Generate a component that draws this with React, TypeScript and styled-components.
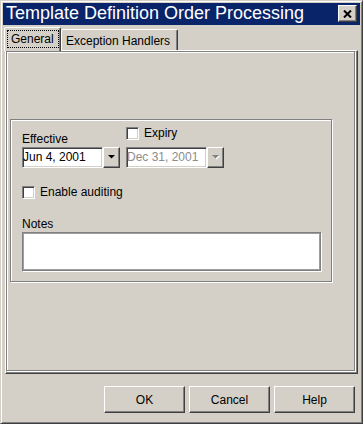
import styled, { createGlobalStyle } from 'styled-components';

const face = '#d4d0c8';
const shadow = '#808080';
const dark = '#404040';

const GlobalStyle = createGlobalStyle`
  html, body {
    margin: 0;
    padding: 0;
    background: ${face};
  }
  body {
    font-family: "Liberation Sans", Arial, sans-serif;
    font-size: 12px;
    color: #000;
  }
`;

const Window = styled.div`
  box-sizing: border-box;
  width: 363px;
  height: 424px;
  padding: 2px;
  display: flex;
  flex-direction: column;
  background: ${face};
  border: 1px solid;
  border-color: ${face} ${dark} ${dark} ${face};
  box-shadow: inset 1px 1px 0 #fff, inset -1px -1px 0 ${shadow};
`;

const TitleBar = styled.div`
  height: 22px;
  flex: none;
  display: flex;
  align-items: flex-start;
  justify-content: space-between;
  background: #0a246a;
`;

const Title = styled.div`
  padding-left: 3px;
  font-size: 18px;
  line-height: 20px;
  color: #fff;
  white-space: nowrap;
`;

const CloseButton = styled.div`
  box-sizing: border-box;
  width: 19px;
  height: 17px;
  margin: 2px 3px 0 0;
  display: flex;
  align-items: center;
  justify-content: center;
  background: ${face};
  border: 1px solid;
  border-color: #fff ${dark} ${dark} #fff;
  box-shadow: inset -1px -1px 0 ${shadow};
`;

const TabStrip = styled.div`
  height: 26px;
  flex: none;
  margin-bottom: -1px;
  padding-left: 1px;
  display: flex;
  align-items: flex-end;
  position: relative;
  z-index: 1;
`;

const Tab = styled.div<{ $selected?: boolean }>`
  box-sizing: border-box;
  width: ${(p) => (p.$selected ? '57px' : '117px')};
  height: ${(p) => (p.$selected ? '24px' : '21px')};
  margin-bottom: ${(p) => (p.$selected ? '0' : '1px')};
  padding: ${(p) => (p.$selected ? '2px 0 0 2px' : '3px 0 0 4px')};
  background: ${face};
  border: 1px solid;
  border-bottom: none;
  border-color: #fff ${dark} transparent #fff;
  border-radius: 2px 2px 0 0;
  box-shadow: inset -1px 0 0 ${shadow};
  font-size: 12px;
  line-height: 16px;
  white-space: nowrap;
`;

const Focus = styled.span`
  display: inline-block;
  padding: 0 4px 0 3px;
  border: 1px dotted #000;
`;

const TabBody = styled.div`
  box-sizing: border-box;
  height: 324px;
  flex: none;
  margin: 0 2px 0 2px;
  display: flex;
  border: 1px solid;
  border-color: #fff ${dark} ${dark} #fff;
  box-shadow: inset -1px -1px 0 ${shadow};
`;

const Page = styled.div`
  flex: 1;
  margin: 0 2px 2px 0;
  padding: 67px 0 0 3px;
  border: 1px solid ${shadow};
  box-shadow: inset 1px 1px 0 #fff, 1px 1px 0 #fff;
`;

const Group = styled.div`
  box-sizing: border-box;
  width: 322px;
  padding: 7px 0 10px 11px;
  border: 1px solid ${shadow};
  box-shadow: inset 1px 1px 0 #fff, 1px 1px 0 #fff;
`;

const DateRow = styled.div`
  display: flex;
  align-items: flex-end;
  gap: 6px;
`;

const Column = styled.div`
  display: flex;
  flex-direction: column;
`;

const Label = styled.div`
  line-height: 14px;
  margin-bottom: 1px;
`;

const CheckRow = styled.label<{ $top?: number; $bottom?: number }>`
  display: flex;
  align-items: center;
  gap: 5px;
  height: 13px;
  line-height: 13px;
  margin-top: ${(p) => p.$top ?? 0}px;
  margin-bottom: ${(p) => p.$bottom ?? 0}px;
`;

const CheckBox = styled.span`
  box-sizing: border-box;
  width: 13px;
  height: 13px;
  flex: none;
  background: #fff;
  border: 1px solid;
  border-color: ${shadow} #fff #fff ${shadow};
  box-shadow: inset 1px 1px 0 ${dark}, inset -1px -1px 0 ${face};
`;

const Combo = styled.div`
  display: flex;
`;

const Field = styled.div<{ $disabled?: boolean }>`
  box-sizing: border-box;
  width: 81px;
  height: 21px;
  background: #fff;
  border: 1px solid;
  border-color: ${shadow} #fff #fff ${shadow};
  box-shadow: inset 1px 1px 0 ${dark}, inset -1px -1px 0 ${face};
  line-height: 19px;
  white-space: nowrap;
  color: ${(p) => (p.$disabled ? '#8c8c8c' : '#000')};
`;

const ArrowButton = styled.div`
  box-sizing: border-box;
  width: 17px;
  height: 21px;
  display: flex;
  align-items: center;
  justify-content: center;
  background: ${face};
  border: 1px solid;
  border-color: #fff ${dark} ${dark} #fff;
  box-shadow: inset -1px -1px 0 ${shadow};
`;

const NotesLabel = styled(Label)`
  margin-top: 18px;
`;

const Notes = styled.div`
  box-sizing: border-box;
  width: 299px;
  height: 39px;
  background: #fff;
  border: 1px solid ${shadow};
  box-shadow: inset 0 0 0 1px #a09d98, 1px 1px 0 #fff;
`;

const ButtonBar = styled.div`
  flex: none;
  margin-top: 12px;
  padding-right: 5px;
  display: flex;
  justify-content: flex-end;
  gap: 4px;
`;

const Button = styled.div`
  box-sizing: border-box;
  width: 81px;
  height: 27px;
  display: flex;
  align-items: center;
  justify-content: center;
  background: ${face};
  border: 1px solid;
  border-color: #fff ${dark} ${dark} #fff;
  box-shadow: inset -1px -1px 0 ${shadow};
  font-size: 12px;
`;

const Arrow = ({ disabled }: { disabled?: boolean }) => (
  <svg width="8" height="5" viewBox="0 0 8 5">
    {disabled && <polygon points="1,1 8,1 4.5,4.5" fill="#fff" />}
    <polygon points="0,0 7,0 3.5,3.5" fill={disabled ? shadow : '#000'} />
  </svg>
);

const DateCombo = ({ value, disabled }: { value: string; disabled?: boolean }) => (
  <Combo>
    <Field $disabled={disabled}>{value}</Field>
    <ArrowButton>
      <Arrow disabled={disabled} />
    </ArrowButton>
  </Combo>
);

const App = () => (
  <>
    <GlobalStyle />
    <Window>
      <TitleBar>
        <Title>Template Definition Order Processing</Title>
        <CloseButton>
          <svg width="9" height="8" viewBox="0 0 9 8">
            <path d="M1 0.5 L8 7.5 M8 0.5 L1 7.5" stroke="#000" strokeWidth="2" />
          </svg>
        </CloseButton>
      </TitleBar>

      <TabStrip>
        <Tab $selected>
          <Focus>General</Focus>
        </Tab>
        <Tab>Exception Handlers</Tab>
      </TabStrip>

      <TabBody>
        <Page>
          <Group>
            <DateRow>
              <Column>
                <Label>Effective</Label>
                <DateCombo value="Jun 4, 2001" />
              </Column>
              <Column>
                <CheckRow $bottom={7}>
                  <CheckBox />
                  Expiry
                </CheckRow>
                <DateCombo value="Dec 31, 2001" disabled />
              </Column>
            </DateRow>
            <CheckRow $top={18}>
              <CheckBox />
              Enable auditing
            </CheckRow>
            <NotesLabel>Notes</NotesLabel>
            <Notes />
          </Group>
        </Page>
      </TabBody>

      <ButtonBar>
        <Button>OK</Button>
        <Button>Cancel</Button>
        <Button>Help</Button>
      </ButtonBar>
    </Window>
  </>
);

export default App;
